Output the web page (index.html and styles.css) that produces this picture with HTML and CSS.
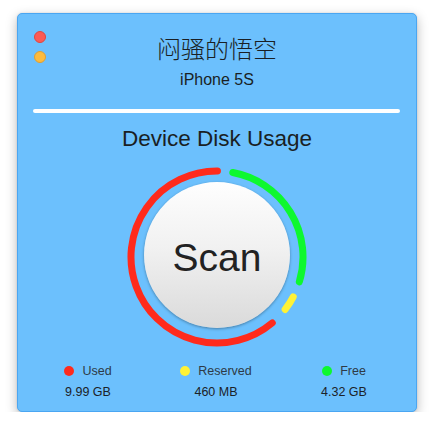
FILE: index.html
```html
<!DOCTYPE html>
<html>
<head>
<meta charset="utf-8">
<link rel="stylesheet" href="styles.css">
</head>
<body>
<div class="window">
  <div class="lights">
    <span class="light red"></span>
    <span class="light yellow"></span>
  </div>
  <div class="title">闷骚的悟空</div>
  <div class="device">iPhone 5S</div>
  <div class="sep"></div>
  <div class="heading">Device Disk Usage</div>
  <div class="ring">
    <svg class="arcs" width="180" height="180" viewBox="0 0 180 180">
      <path d="M145.28 155.88 A86 86 0 1 1 90.45 4.0" stroke="#ff2a1c" />
      <path d="M105.82 5.47 A86 86 0 0 1 172.33 114.86" stroke="#0ef82f" />
      <path d="M166.21 129.85 A86 86 0 0 1 158.16 142.47" stroke="#fff236" />
    </svg>
    <div class="scan">Scan</div>
  </div>
  <div class="legend">
    <div class="col">
      <div class="label"><span class="dot used"></span>Used</div>
      <div class="value">9.99 GB</div>
    </div>
    <div class="col">
      <div class="label"><span class="dot reserved"></span>Reserved</div>
      <div class="value">460 MB</div>
    </div>
    <div class="col">
      <div class="label"><span class="dot free"></span>Free</div>
      <div class="value">4.32 GB</div>
    </div>
  </div>
</div>
</body>
</html>
```
FILE: styles.css
```css
html, body {
  margin: 0;
  padding: 0;
  background: #ffffff;
}
body {
  font-family: "Liberation Sans", Arial, sans-serif;
  color: #1c1c1c;
}
.window {
  position: relative;
  box-sizing: border-box;
  width: 400px;
  height: 399px;
  margin: 13px 0 0 17px;
  background: #6cc0fd;
  border: 1px solid #4aa6f2;
  border-radius: 5px;
  box-shadow: 0 4px 12px rgba(0, 0, 0, 0.28), 0 0 2px rgba(0, 0, 0, 0.12);
  display: flex;
  flex-direction: column;
  align-items: center;
  padding-top: 19px;
}
.lights {
  position: absolute;
  left: 16px;
  top: 17px;
  display: flex;
  flex-direction: column;
  gap: 8px;
}
.light {
  display: block;
  box-sizing: border-box;
  width: 12px;
  height: 12px;
  border-radius: 50%;
}
.light.red {
  background: #fc5a55;
  border: 1px solid #e0463f;
}
.light.yellow {
  background: #fdbb3e;
  border: 1px solid #e09f33;
}
.title {
  font-family: "Noto Sans CJK SC", sans-serif;
  font-size: 24px;
  line-height: 30px;
  color: #1a1f24;
  font-weight: 300;
}
.device {
  margin-top: 7px;
  font-size: 16px;
  line-height: 20px;
  color: #1a1f24;
}
.sep {
  align-self: stretch;
  margin: 19px 16px 0 15px;
  height: 4px;
  border-radius: 2px;
  background: #ffffff;
}
.heading {
  margin-top: 12px;
  font-size: 22.5px;
  line-height: 28px;
  color: #1a1f24;
}
.ring {
  position: relative;
  margin-top: 14px;
  width: 180px;
  height: 180px;
}
.arcs {
  display: block;
}
.arcs path {
  fill: none;
  stroke-width: 7;
  stroke-linecap: round;
}
.scan {
  position: absolute;
  left: 17px;
  top: 15px;
  width: 146px;
  height: 146px;
  border-radius: 50%;
  background: linear-gradient(#fefefe, #f1f1f1 45%, #dadada);
  box-shadow: 0 1px 3px rgba(0, 0, 0, 0.35);
  display: flex;
  align-items: center;
  justify-content: center;
  font-size: 39px;
  padding-top: 6px;
  box-sizing: border-box;
  color: #222222;
}
.legend {
  margin-top: 15px;
  display: grid;
  grid-template-columns: repeat(3, 128px);
  margin-left: -2px;
}
.col {
  display: flex;
  flex-direction: column;
  align-items: center;
  gap: 3px;
}
.label {
  display: flex;
  align-items: center;
  gap: 8px;
  font-size: 12.5px;
  line-height: 18px;
  color: #2e3a46;
}
.value {
  font-size: 12.5px;
  line-height: 18px;
  color: #1c2228;
}
.dot {
  width: 10px;
  height: 10px;
  border-radius: 50%;
}
.dot.used { background: #ff2a1c; }
.dot.reserved { background: #fff236; }
.dot.free { background: #0ef82f; }
```
